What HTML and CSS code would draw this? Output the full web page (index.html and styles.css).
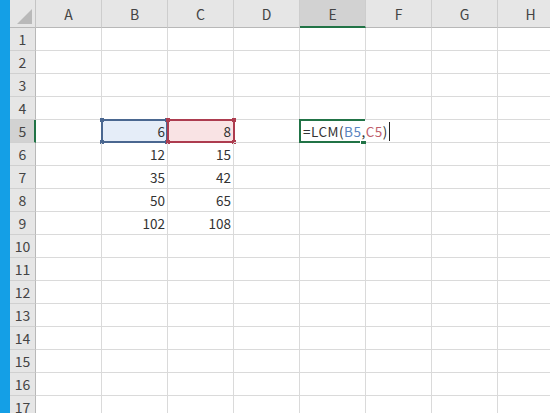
FILE: index.html
```html
<!DOCTYPE html>
<html>
<head>
<meta charset="utf-8">
<link rel="stylesheet" href="styles.css">
</head>
<body>
<div class="strip"></div>
<div class="sheet">
  <div class="hrow">
    <div class="corner"><div class="tri"></div></div>
    <div class="ch">A</div><div class="ch">B</div><div class="ch">C</div><div class="ch">D</div>
    <div class="ch sel">E</div><div class="ch">F</div><div class="ch">G</div><div class="ch">H</div>
  </div>
  <div class="row"><div class="rh">1</div><div class="c"></div><div class="c"></div><div class="c"></div><div class="c"></div><div class="c"></div><div class="c"></div><div class="c"></div><div class="c"></div></div>
  <div class="row"><div class="rh">2</div><div class="c"></div><div class="c"></div><div class="c"></div><div class="c"></div><div class="c"></div><div class="c"></div><div class="c"></div><div class="c"></div></div>
  <div class="row"><div class="rh">3</div><div class="c"></div><div class="c"></div><div class="c"></div><div class="c"></div><div class="c"></div><div class="c"></div><div class="c"></div><div class="c"></div></div>
  <div class="row"><div class="rh">4</div><div class="c"></div><div class="c"></div><div class="c"></div><div class="c"></div><div class="c"></div><div class="c"></div><div class="c"></div><div class="c"></div></div>
  <div class="row"><div class="rh sel">5</div><div class="c"></div>
    <div class="c num ref-b">6<span class="frame fb"><i class="h tl"></i><i class="h tr"></i><i class="h bl"></i><i class="h br"></i></span></div>
    <div class="c num ref-c">8<span class="frame fc"><i class="h tl"></i><i class="h tr"></i><i class="h bl"></i><i class="h br"></i></span></div>
    <div class="c"></div>
    <div class="c edit"><span class="frame fe"><i class="fill"></i></span><span class="ftext">=LCM(<span class="rb">B5</span>,<span class="rc">C5</span>)</span><span class="caret"></span></div>
    <div class="c"></div><div class="c"></div><div class="c"></div></div>
  <div class="row"><div class="rh">6</div><div class="c"></div><div class="c num">12</div><div class="c num">15</div><div class="c"></div><div class="c"></div><div class="c"></div><div class="c"></div><div class="c"></div></div>
  <div class="row"><div class="rh">7</div><div class="c"></div><div class="c num">35</div><div class="c num">42</div><div class="c"></div><div class="c"></div><div class="c"></div><div class="c"></div><div class="c"></div></div>
  <div class="row"><div class="rh">8</div><div class="c"></div><div class="c num">50</div><div class="c num">65</div><div class="c"></div><div class="c"></div><div class="c"></div><div class="c"></div><div class="c"></div></div>
  <div class="row"><div class="rh">9</div><div class="c"></div><div class="c num">102</div><div class="c num">108</div><div class="c"></div><div class="c"></div><div class="c"></div><div class="c"></div><div class="c"></div></div>
  <div class="row"><div class="rh">10</div><div class="c"></div><div class="c"></div><div class="c"></div><div class="c"></div><div class="c"></div><div class="c"></div><div class="c"></div><div class="c"></div></div>
  <div class="row"><div class="rh">11</div><div class="c"></div><div class="c"></div><div class="c"></div><div class="c"></div><div class="c"></div><div class="c"></div><div class="c"></div><div class="c"></div></div>
  <div class="row"><div class="rh">12</div><div class="c"></div><div class="c"></div><div class="c"></div><div class="c"></div><div class="c"></div><div class="c"></div><div class="c"></div><div class="c"></div></div>
  <div class="row"><div class="rh">13</div><div class="c"></div><div class="c"></div><div class="c"></div><div class="c"></div><div class="c"></div><div class="c"></div><div class="c"></div><div class="c"></div></div>
  <div class="row"><div class="rh">14</div><div class="c"></div><div class="c"></div><div class="c"></div><div class="c"></div><div class="c"></div><div class="c"></div><div class="c"></div><div class="c"></div></div>
  <div class="row"><div class="rh">15</div><div class="c"></div><div class="c"></div><div class="c"></div><div class="c"></div><div class="c"></div><div class="c"></div><div class="c"></div><div class="c"></div></div>
  <div class="row"><div class="rh">16</div><div class="c"></div><div class="c"></div><div class="c"></div><div class="c"></div><div class="c"></div><div class="c"></div><div class="c"></div><div class="c"></div></div>
  <div class="row"><div class="rh">17</div><div class="c"></div><div class="c"></div><div class="c"></div><div class="c"></div><div class="c"></div><div class="c"></div><div class="c"></div><div class="c"></div></div>
</div>
</body>
</html>
```
FILE: styles.css
```css
html, body {
  margin: 0;
  padding: 0;
  width: 550px;
  height: 413px;
  overflow: hidden;
  background: #fff;
}
body {
  display: flex;
  font-family: "Noto Sans CJK JP", "Noto Sans", sans-serif;
  font-size: 13.5px;
  color: #333;
}
.strip {
  flex: 0 0 10px;
  background: #149fe6;
}
.sheet {
  flex: 0 0 auto;
  display: flex;
  flex-direction: column;
}
.hrow, .row {
  display: flex;
}
.hrow {
  height: 28px;
}
.corner {
  position: relative;
  box-sizing: border-box;
  width: 26px;
  height: 28px;
  background: #e6e6e6;
  border-right: 1px solid #c4c4c4;
  border-bottom: 1px solid #b8b8b8;
}
.tri {
  position: absolute;
  right: 3px;
  bottom: 3px;
  width: 0;
  height: 0;
  border-left: 15px solid transparent;
  border-bottom: 15px solid #b9b9b9;
}
.ch {
  box-sizing: border-box;
  width: 66px;
  flex: 0 0 66px;
  height: 28px;
  background: #e6e6e6;
  border-right: 1px solid #cdcdcd;
  border-bottom: 1px solid #b8b8b8;
  display: flex;
  align-items: center;
  justify-content: center;
  color: #444;
  font-size: 14px;
  padding-top: 1px;
}
.ch.sel {
  background: #d2d2d2;
  border-bottom: 2px solid #217346;
  padding-top: 2px;
}
.row {
  height: 23px;
}
.rh {
  box-sizing: border-box;
  width: 26px;
  flex: 0 0 26px;
  height: 23px;
  background: #e6e6e6;
  border-right: 1px solid #b8b8b8;
  border-bottom: 1px solid #d0d0d0;
  display: flex;
  align-items: center;
  justify-content: center;
  color: #444;
  font-size: 14px;
}
.rh.sel {
  background: #d2d2d2;
  border-right: 2px solid #217346;
  padding-left: 1px;
}
.c {
  position: relative;
  box-sizing: border-box;
  width: 66px;
  flex: 0 0 66px;
  height: 23px;
  border-right: 1px solid #dadada;
  border-bottom: 1px solid #dadada;
  display: flex;
  align-items: center;
  padding: 0 2px;
  white-space: nowrap;
}
.num {
  justify-content: flex-end;
}
.ref-b { background: #e5edf8; }
.ref-c { background: #f9e3e4; }
.frame {
  position: absolute;
  left: -1px;
  top: -1px;
  right: -1px;
  bottom: -1px;
  border: 2px solid;
  pointer-events: none;
}
.fb { border-color: #4a6790; }
.fc { border-color: #ad3c4f; right: -2px; }
.fb .h { background: #4a6790; }
.fc .h { background: #ad3c4f; }
.h {
  position: absolute;
  width: 4px;
  height: 4px;
}
.tl { left: -3px; top: -3px; }
.tr { right: -3px; top: -3px; }
.bl { left: -3px; bottom: -3px; }
.br { right: -3px; bottom: -3px; }
.edit {
  overflow: visible;
  z-index: 2;
  border-right-color: transparent;
}
.fe {
  border-color: #217346;
  border-right: none;
  left: -1px;
  right: 0;
}
.fe .fill {
  position: absolute;
  right: -1px;
  bottom: -3px;
  width: 5px;
  height: 4px;
  background: #217346;
  border-left: 1px solid #fff;
  border-top: 1px solid #fff;
}
.ftext {
  position: relative;
  flex-shrink: 0;
  background: #fff;
  color: #333;
  padding-left: 1px;
  letter-spacing: 0.5px;
}
.rb { color: #5a84c0; }
.rc { color: #c0606c; }
.caret {
  position: relative;
  flex: 0 0 1px;
  width: 1px;
  height: 19px;
  background: #222;
  margin-left: 1px;
}
```
